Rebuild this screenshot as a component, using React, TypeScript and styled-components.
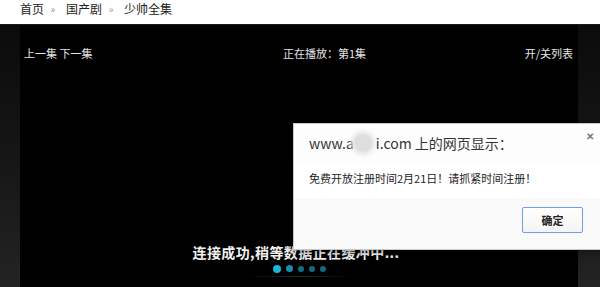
import React from "react";
import styled, { createGlobalStyle } from "styled-components";

const GlobalStyle = createGlobalStyle`
  html, body {
    margin: 0;
    padding: 0;
    background: #ffffff;
    overflow: hidden;
  }
  body {
    font-family: "Noto Sans CJK SC", "Noto Sans", sans-serif;
  }
`;

const Page = styled.div`
  width: 600px;
  height: 287px;
  position: relative;
  overflow: hidden;
`;

const Breadcrumb = styled.div`
  height: 24px;
  display: flex;
  align-items: flex-start;
  padding-left: 20px;
  font-size: 12px;
  line-height: 18px;
  color: #222;
  box-sizing: border-box;
`;

const Crumb = styled.span`
  color: #222;
`;

const Sep = styled.span`
  display: inline-block;
  width: 22px;
  padding-right: 4px;
  box-sizing: border-box;
  text-align: center;
  color: #999;
  font-size: 10px;
`;

const Player = styled.div`
  height: 263px;
  background: #000;
  border-top: 1px solid #1a1a1a;
  box-sizing: border-box;
  display: flex;
`;

const Side = styled.div<{ w: number }>`
  width: ${(p) => p.w}px;
  flex-shrink: 0;
  background: linear-gradient(to bottom, #0b0b0b 0%, #161616 50%, #232323 100%);
`;

const Screen = styled.div`
  flex: 1;
  display: flex;
  flex-direction: column;
`;

const Controls = styled.div`
  display: grid;
  grid-template-columns: 259px auto 1fr;
  padding: 20px 5px 0 4px;
  font-size: 11px;
  line-height: 16px;
  color: #e4e4e4;
`;

const Control = styled.span<{ end?: boolean }>`
  text-align: ${(p) => (p.end ? "right" : "left")};
`;

const Loading = styled.div`
  margin-top: auto;
  padding-bottom: 10px;
  display: flex;
  flex-direction: column;
  align-items: center;
`;

const LoadingText = styled.div`
  font-size: 14px;
  font-weight: bold;
  color: #f2f2f2;
  line-height: 18px;
  letter-spacing: 0.4px;
  margin-right: 6px;
`;

const Dots = styled.div`
  display: flex;
  align-items: center;
  gap: 5px;
  margin-top: 3px;
  height: 9px;
`;

const Dot = styled.span<{ size: number; color: string }>`
  width: ${(p) => p.size}px;
  height: ${(p) => p.size}px;
  border-radius: 50%;
  background: ${(p) => p.color};
`;

const Line = styled.div`
  width: 110px;
  height: 1px;
  margin-top: 3px;
  background: linear-gradient(to right, transparent, #0f3440, transparent);
`;

const Dialog = styled.div`
  position: absolute;
  left: 293px;
  top: 123px;
  width: 330px;
  height: 127px;
  background: #ffffff;
  border: 1px solid #c8c8c8;
  box-shadow: 0 2px 8px rgba(0, 0, 0, 0.4);
  display: flex;
  flex-direction: column;
  box-sizing: border-box;
`;

const DialogHead = styled.div`
  height: 38px;
  display: flex;
  align-items: center;
  padding-left: 15px;
  background: #fdfdfd;
  position: relative;
`;

const Title = styled.div`
  font-size: 14px;
  color: #333;
  display: flex;
  align-items: center;
`;

const Blur = styled.span`
  display: inline-block;
  width: 18px;
  height: 18px;
  margin: 0 4px 0 0;
  border-radius: 50%;
  background: #dedede;
  box-shadow: 0 0 4px 3px #e6e6e6;
`;

const Close = styled.span`
  position: absolute;
  left: 292px;
  top: 4px;
  font-size: 10px;
  font-weight: bold;
  color: #777;
`;

const Message = styled.div`
  padding: 8px 15px 0 15px;
  height: 36px;
  font-size: 11px;
  color: #222;
  box-sizing: border-box;
`;

const Footer = styled.div`
  flex: 1;
  background: #f9f9f9;
  display: flex;
  align-items: flex-start;
  padding: 9px 0 0 228px;
`;

const OkButton = styled.button`
  width: 61px;
  height: 26px;
  border: 1px solid #6d9ee6;
  border-radius: 2px;
  background: linear-gradient(#ffffff, #f4f4f4);
  font-family: "Noto Sans CJK SC", sans-serif;
  font-size: 11px;
  font-weight: bold;
  color: #222;
  padding: 0;
`;

const dots = [
  { size: 8, color: "#1bb5dc" },
  { size: 7, color: "#168fb0" },
  { size: 6, color: "#116f88" },
  { size: 6, color: "#0f6a82" },
  { size: 6, color: "#0f6a82" },
];

export default function App() {
  return (
    <Page>
      <GlobalStyle />
      <Breadcrumb>
        <Crumb>首页</Crumb>
        <Sep>»</Sep>
        <Crumb>国产剧</Crumb>
        <Sep>»</Sep>
        <Crumb>少帅全集</Crumb>
      </Breadcrumb>
      <Player>
        <Side w={20} />
        <Screen>
          <Controls>
            <Control>上一集 下一集</Control>
            <Control>正在播放：第1集</Control>
            <Control end>开/关列表</Control>
          </Controls>
          <Loading>
            <LoadingText>连接成功,稍等数据正在缓冲中...</LoadingText>
            <Dots>
              {dots.map((d, i) => (
                <Dot key={i} size={d.size} color={d.color} />
              ))}
            </Dots>
            <Line />
          </Loading>
        </Screen>
        <Side w={22} />
      </Player>
      <Dialog>
        <DialogHead>
          <Title>
            www.a<Blur />
            i.com 上的网页显示：
          </Title>
          <Close>✕</Close>
        </DialogHead>
        <Message>免费开放注册时间2月21日！请抓紧时间注册！</Message>
        <Footer>
          <OkButton>确定</OkButton>
        </Footer>
      </Dialog>
    </Page>
  );
}
